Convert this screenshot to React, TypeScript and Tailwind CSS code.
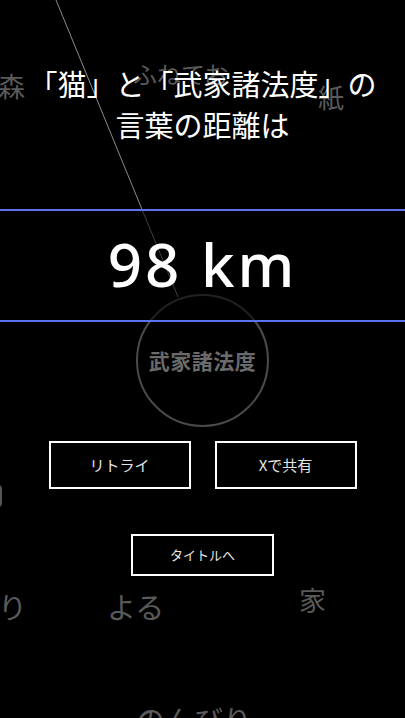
import React from 'react';

// floating words drawn on the background canvas
const WORDS = [
  { text: '森', x: -2, y: 72, size: 27 },
  { text: 'ふねてお', x: 133, y: 62, size: 24 },
  { text: '紙', x: 318, y: 84, size: 26 },
  { text: 'り', x: -2, y: 592, size: 29 },
  { text: 'よる', x: 107, y: 592, size: 29 },
  { text: '家', x: 299, y: 586, size: 27 },
  { text: 'のんびり', x: 136, y: 705, size: 29 },
];

const FONT = { fontFamily: '"Noto Sans CJK JP", "Noto Sans", sans-serif' };

const OutlineButton = ({ label, className }: { label: string; className: string }) => (
  <button className={`border-2 border-white bg-black text-[#e5e5e5] flex items-center justify-center ${className}`}>
    {label}
  </button>
);

export default function App() {
  return (
    <div className="relative w-[405px] h-[718px] overflow-hidden bg-black" style={FONT}>
      {/* --- BACKGROUND CANVAS --- */}
      <div className="absolute inset-0">
        <svg className="absolute inset-0" width={405} height={718}>
          <line x1={56} y1={0} x2={178} y2={297} stroke="#8a8a8a" strokeWidth={1} />
        </svg>
        {WORDS.map((w) => (
          <span
            key={w.text}
            className="absolute text-[#5a5a5a] leading-none whitespace-nowrap"
            style={{ left: w.x, top: w.y, fontSize: w.size }}
          >
            {w.text}
          </span>
        ))}
        <div className="absolute left-[-8px] top-[484px] w-[10px] h-[24px] rounded-full border-2 border-[#555]" />
        <div className="absolute left-[136px] top-[294px] w-[133px] h-[133px] rounded-full border-2 border-[#4a4a4a] flex items-center justify-center">
          <span className="text-[21px] font-bold text-[#6a6a6a] tracking-[0.5px]">武家諸法度</span>
        </div>
      </div>

      {/* --- FOREGROUND --- */}
      <div className="relative flex flex-col items-center">
        <h1 className="pt-[63px] text-white text-[29px] leading-[41px] text-center font-normal whitespace-nowrap">
          「猫」と「武家諸法度」の
          <br />
          言葉の距離は
        </h1>

        <div className="mt-[64px] w-full h-[113px] border-y-2 border-[#5b72f2] bg-black/55 flex items-center justify-center">
          <span
            className="text-white text-[60px] font-medium tracking-[3px] leading-none pb-[4px]"
            style={{ fontFamily: '"Noto Sans", sans-serif' }}
          >
            98 km
          </span>
        </div>

        <div className="mt-[119px] flex gap-[24px]">
          <OutlineButton label="リトライ" className="w-[142px] h-[48px] text-[15px]" />
          <OutlineButton label="Xで共有" className="w-[142px] h-[48px] text-[15px]" />
        </div>

        <OutlineButton label="タイトルへ" className="mt-[45px] w-[143px] h-[42px] text-[13px]" />
      </div>
    </div>
  );
}
